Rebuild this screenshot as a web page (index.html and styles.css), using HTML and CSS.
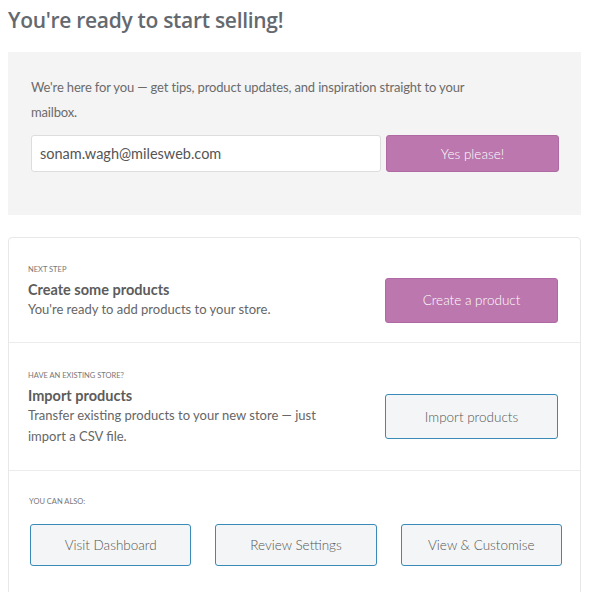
FILE: index.html
```html
<!DOCTYPE html>
<html>
<head>
<meta charset="utf-8">
<link rel="stylesheet" href="styles.css">
</head>
<body>
<div class="page">
  <h1 class="title">You're ready to start selling!</h1>
  <div class="newsletter">
    <p class="news-text">We're here for you — get tips, product updates, and inspiration straight to your mailbox.</p>
    <div class="news-form">
      <div class="email-input">sonam.wagh@milesweb.com</div>
      <div class="btn btn-primary btn-yes">Yes please!</div>
    </div>
  </div>
  <div class="card">
    <div class="row">
      <div class="row-text">
        <div class="label">NEXT STEP</div>
        <div class="row-title">Create some products</div>
        <div class="row-desc">You're ready to add products to your store.</div>
      </div>
      <div class="btn btn-primary btn-action">Create a product</div>
    </div>
    <div class="row row-import">
      <div class="row-text">
        <div class="label">HAVE AN EXISTING STORE?</div>
        <div class="row-title">Import products</div>
        <div class="row-desc">Transfer existing products to your new store — just import a CSV file.</div>
      </div>
      <div class="btn btn-secondary btn-action">Import products</div>
    </div>
    <div class="row-also">
      <div class="label">YOU CAN ALSO:</div>
      <div class="also-buttons">
        <div class="btn btn-secondary btn-also">Visit Dashboard</div>
        <div class="btn btn-secondary btn-also">Review Settings</div>
        <div class="btn btn-secondary btn-also">View &amp; Customise</div>
      </div>
    </div>
  </div>
</div>
</body>
</html>
```
FILE: styles.css
```css
* { box-sizing: border-box; }
html, body { margin: 0; padding: 0; background: #fff; }
body {
  font-family: "Lato", "Open Sans", sans-serif;
  color: #666;
}
.page {
  width: 573px;
  margin-left: 8px;
}
.title {
  margin: 0;
  padding-top: 6px;
  height: 52px;
  font-family: "Open Sans", sans-serif;
  font-size: 21px;
  font-weight: 600;
  color: #646970;
  letter-spacing: -0.3px;
}
.newsletter {
  background: #f4f4f4;
  padding: 23px 22px 43px 23px;
  height: 163px;
}
.news-text {
  margin: 0 0 10px;
  font-size: 13px;
  line-height: 25px;
  color: #6b6b6b;
  letter-spacing: -0.15px;
  width: 480px;
}
.news-form {
  display: flex;
  gap: 5px;
}
.email-input {
  width: 350px;
  height: 37px;
  background: #fff;
  border: 1px solid #ddd;
  border-radius: 3px;
  padding: 0 8px;
  display: flex;
  align-items: center;
  font-size: 14.5px;
  color: #555;
}
.btn {
  display: flex;
  align-items: center;
  justify-content: center;
  border-radius: 3px;
  font-size: 13.5px;
  font-weight: 300;
}
.btn-primary {
  background: #bb77ae;
  border: 1px solid #b06aa3;
  color: #fff;
}
.btn-secondary {
  background: #f3f5f6;
  border: 1.5px solid #3a8ab8;
  color: #555;
}
.btn-yes {
  width: 173px;
  height: 37px;
}
.card {
  margin-top: 22px;
  border: 1px solid #e8e8e8;
  border-radius: 4px;
  height: 380px;
}
.row {
  display: flex;
  justify-content: space-between;
  align-items: center;
  padding: 24px 22px 20px 19px;
  border-bottom: 1px solid #ececec;
  height: 105px;
}
.row-import {
  height: 128px;
}
.row-text {
  width: 300px;
}
.label {
  font-size: 7.5px;
  color: #777;
  line-height: 12px;
  margin-bottom: 4px;
}
.row-title {
  font-size: 14.5px;
  font-weight: 700;
  color: #5c5c5c;
  line-height: 19px;
}
.row-desc {
  font-size: 13px;
  color: #666;
  line-height: 21px;
}
.btn-action {
  width: 173px;
  height: 45px;
  margin-top: 16px;
}
.row-also {
  padding: 25px 18px 20px 20px;
}
.also-buttons {
  display: flex;
  gap: 24px;
  margin-top: 16px;
  padding-left: 1px;
}
.btn-also {
  width: 162px;
  height: 42px;
}
```
